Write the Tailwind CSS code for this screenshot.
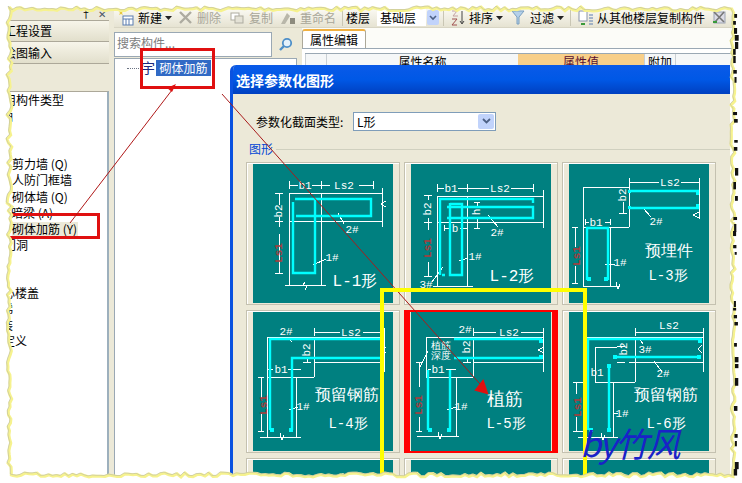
<!DOCTYPE html>
<html lang="zh">
<head>
<meta charset="UTF-8">
<title>选择参数化图形</title>
<script src="https://cdn.jsdelivr.net/npm/@tailwindcss/browser@4"></script>
</head>
<body class="bg-white">
<div class="relative w-[742px] h-[483px] overflow-hidden flex pt-[8px] bg-[#ece9d8] text-[12px] leading-none text-black font-['Noto_Sans_CJK_SC','Liberation_Sans',sans-serif]">

  <!-- left panel -->
  <aside class="w-[109px] shrink-0 flex flex-col overflow-hidden">
    <div class="h-[12px] flex justify-end items-center gap-[7px] pr-[3px] text-[10px]">
      <span>&#x2020;</span><span class="text-gray-600">&#x2715;</span>
    </div>
    <div class="h-[22px] pl-[4px] flex items-center bg-gradient-to-b from-[#f7f5ea] to-[#e2dfcc] border-y border-[#aca899]">工程设置</div>
    <div class="h-[22px] pl-[4px] flex items-center bg-gradient-to-b from-[#f7f5ea] to-[#e2dfcc] border-b border-[#aca899]">绘图输入</div>
    <div class="h-[27px] bg-[#ece9d8]"></div>
    <div class="flex-1 bg-white border-r-2 border-[#9db0bd] border-t border-t-[#aca899] flex flex-col">
      <div class="h-[16px] pl-[4px] flex items-center whitespace-nowrap ml-[-12px]">常用构件类型</div>
      <div class="h-[16px] pl-[1px] flex items-center">轴</div>
      <div class="h-[32px]"></div>
      <div class="h-[16px] pl-[12px] flex items-center">剪力墙 (Q)</div>
      <div class="h-[16px] pl-[12px] flex items-center">人防门框墙</div>
      <div class="h-[17px] pl-[12px] flex items-center">砌体墙 (Q)</div>
      <div class="h-[16px] pl-[11px] flex items-center">暗梁 (A)</div>
      <div class="h-[16px] pl-[12px] flex items-center"><span class="bg-[#ece9d8] h-[15px] w-[66px] flex items-center whitespace-nowrap">砌体加筋 (Y)</span></div>
      <div class="h-[16px] pl-[4px] flex items-center">门洞</div>
      <div class="h-[32px]"></div>
      <div class="h-[16px] flex items-center whitespace-nowrap ml-[-9px]">空心楼盖</div>
      <div class="h-[16px] pl-[1px] flex items-center">梯</div>
      <div class="h-[16px] pl-[1px] flex items-center">装</div>
      <div class="h-[16px] flex items-center whitespace-nowrap ml-[-9px]">自定义</div>
    </div>
  </aside>

  <!-- main -->
  <main class="flex-1 min-w-0 flex flex-col pl-[5px]">
    <!-- toolbar -->
    <div class="h-[20px] shrink-0 flex items-center bg-gradient-to-b from-[#fbfaf4] to-[#e6e3d2] border-b border-[#d8d5c4] whitespace-nowrap">
      <svg class="ml-[4px] w-[16px] h-[16px]" viewBox="0 0 16 16"><path d="M1 1l2 1 2-1-1 2 1 2-2-1-2 1 1-2z" fill="#e8c840"/><rect x="5" y="6" width="10" height="9" fill="#fff" stroke="#5a7db0"/><path d="M5 9h10M8 9v6M11 9v6" stroke="#5a7db0"/></svg>
      <span class="ml-[4px]">新建</span>
      <svg class="ml-[3px] w-[7px] h-[4px]" viewBox="0 0 7 4"><path d="M0 0h7L3.500 4z" fill="#222"/></svg>
      <svg class="ml-[7px] w-[13px] h-[13px]" viewBox="0 0 13 13"><path d="M1 1l11 11M12 1L1 12" stroke="#adaba0" stroke-width="2.4"/></svg>
      <span class="ml-[5px] text-[#a8a698]">删除</span>
      <svg class="ml-[9px] w-[14px] h-[12px]" viewBox="0 0 14 12"><rect x="1" y="1" width="8" height="7" fill="#fff" stroke="#adaba0"/><rect x="5" y="4" width="8" height="7" fill="#e4e2d6" stroke="#adaba0"/></svg>
      <span class="ml-[5px] text-[#a8a698]">复制</span>
      <svg class="ml-[7px] w-[16px] h-[15px]" viewBox="0 0 16 15"><path d="M1 14L7 3l3 3-5 8z" fill="#b9b7aa"/><path d="M10 8h5v6h-5z" fill="#8d8b7e"/></svg>
      <span class="ml-[4px] text-[#a8a698]">重命名</span>
      <span class="ml-[6px] w-px h-[16px] bg-[#c9c6b4]"></span>
      <span class="ml-[3px]">楼层</span>
      <span class="ml-[7px] w-[49px] h-[17px] bg-white flex items-center pl-[3px]">基础层</span>
      <span class="ml-[1px] w-[12px] h-[15px] bg-[#c1d3fb] flex items-center justify-center rounded-[2px]"><svg class="w-[8px] h-[6px]" viewBox="0 0 8 6"><path d="M1 1l3 3 3-3" fill="none" stroke="#4d6185" stroke-width="1.6"/></svg></span>
      <span class="ml-[4px] w-px h-[16px] bg-[#c9c6b4]"></span>
      <svg class="ml-[6px] w-[16px] h-[16px]" viewBox="0 0 16 16"><path d="M2 1h5L3 6h5" fill="none" stroke="#c3a0a0"/><path d="M2 9h5L2 15h5" fill="none" stroke="#a05050"/><path d="M12 1v12M10 11l2 3 2-3" fill="none" stroke="#444"/></svg>
      <span class="ml-[3px]">排序</span>
      <svg class="ml-[3px] w-[7px] h-[4px]" viewBox="0 0 7 4"><path d="M0 0h7L3.500 4z" fill="#222"/></svg>
      <svg class="ml-[8px] w-[14px] h-[15px]" viewBox="0 0 14 15"><path d="M1 1h12L8 7v7H6V7z" fill="#b4d0ea" stroke="#7a9fbe"/></svg>
      <span class="ml-[5px]">过滤</span>
      <svg class="ml-[3px] w-[7px] h-[4px]" viewBox="0 0 7 4"><path d="M0 0h7L3.500 4z" fill="#222"/></svg>
      <span class="ml-[6px] w-px h-[16px] bg-[#c9c6b4]"></span>
      <svg class="ml-[7px] w-[16px] h-[16px]" viewBox="0 0 16 16"><rect x="1" y="1" width="8" height="10" fill="#fff" stroke="#8a94a8"/><path d="M11 5h4M11 8h4M11 11h4M11 14h4" stroke="#5a7db0"/><path d="M3 14h4" stroke="#3a9a3a" stroke-width="2"/></svg>
      <span class="ml-[3px]">从其他楼层复制构件</span>
      <svg class="ml-[7px] w-[15px] h-[15px]" viewBox="0 0 15 15"><rect x="2" y="2" width="11" height="11" fill="#dcdce6" stroke="#9aa2b2"/><path d="M2 2l10 10M12 2L3 12" stroke="#777" stroke-width="1.600"/><path d="M1 12h4" stroke="#3a9a3a" stroke-width="2"/></svg>
    </div>

    <div class="flex-1 flex min-h-0">
      <!-- component tree -->
      <section class="w-[183px] shrink-0 flex flex-col pt-[4px]">
        <div class="h-[25px] flex gap-[2px]">
          <div class="w-[158px] bg-white border border-[#9aa8b4] pl-[2px] pb-[3px] flex items-center text-[#7d7d7d] text-[12px]">搜索构件...</div>
          <div class="w-[23px] flex items-center justify-center">
            <svg class="w-[15px] h-[15px]" viewBox="0 0 15 15"><circle cx="9" cy="6" r="4.2" fill="#e4f1fb" stroke="#4e8fc8" stroke-width="1.8"/><path d="M6 9l-4 4" stroke="#4e8fc8" stroke-width="2.4"/></svg>
          </div>
        </div>
        <div class="flex-1 mt-[1px] bg-white border border-[#9aa8b4] pt-[1px] flex items-start">
          <span class="ml-[12px] mt-[8px] w-[14px] border-t border-dotted border-gray-500"></span>
          <span class="text-[14px] text-[#1c2a80] w-[12px]">宇</span>
          <span class="ml-[3px] w-[55px] h-[16px] bg-[#316ac5] text-white flex items-center justify-center">砌体加筋</span>
        </div>
      </section>

      <!-- property panel -->
      <section class="flex-1 min-w-0 pl-[5px] flex flex-col">
        <div class="h-[20px] bg-[#fcfcf8] pt-px">
          <div class="h-[19px] w-[64px] bg-white border border-b-0 border-[#aca899] border-t-2 border-t-[#f0b040] rounded-t-[3px] flex items-center justify-center">属性编辑</div>
        </div>
        <div class="flex-1 bg-white border-t border-[#9aa8b4] pt-[4px] pl-[3px]">
          <div class="h-[14px] flex border-t border-[#9aa8b4] bg-[#f5f7f8]">
            <div class="w-[22px] border-x border-[#c9cfd4]"></div>
            <div class="w-[191px] text-center pt-[2px]">属性名称</div>
            <div class="w-[126px] bg-[#f8cf8a] text-[#5a1030] text-center pt-[2px]">属性值</div>
            <div class="w-[32px] border-x border-[#c9cfd4] text-center pt-[2px]">附加</div>
          </div>
        </div>
      </section>
    </div>
  </main>

  <!-- dialog -->
  <div class="absolute left-[230px] top-[65px] w-[500px] h-[418px] bg-[#ece9d8] border-l-[3px] border-[#0a52e0] rounded-tl-[6px] overflow-hidden">
    <div class="h-[29px] bg-gradient-to-b from-[#0a5ae8] via-[#0058e6] to-[#0040c0] flex items-center pl-[3px] font-bold text-[14px] text-white">选择参数化图形</div>
    <div class="flex items-center h-[19px] mt-[18px] pl-[23px]">
      <span class="w-[97px]">参数化截面类型:</span>
      <div class="w-[143px] h-[19px] bg-white border border-[#7f9db9] flex items-center justify-between pl-[3px] pr-px">
        <span>L形</span>
        <span class="w-[16px] h-[15px] bg-[#c1d3fb] rounded-[2px] flex items-center justify-center"><svg class="w-[9px] h-[7px]" viewBox="0 0 9 7"><path d="M1 1l3.500 3.500L8 1" fill="none" stroke="#4d6185" stroke-width="1.800"/></svg></span>
      </div>
    </div>
    <div class="flex items-center h-[12px] mt-[12px] pl-[16px]">
      <span class="text-[#0046d5]">图形</span>
      <span class="ml-[3px] flex-1 h-px bg-[#d0d0bf]"></span>
    </div>
    <div class="grid grid-cols-[154px_154px_154px] gap-x-[4px] gap-y-[5px] mt-[7px] ml-[13px] w-[470px]">

      <!-- L-1 -->
      <div class="h-[143px] border border-[#c4c1b0] shadow-[inset_1px_1px_0_#fff] flex items-center justify-center">
        <svg class="w-[140px] h-[139px] bg-[#008080]" viewBox="0 0 140 139" font-size="11" font-family="'Liberation Mono',monospace" text-anchor="middle" fill="#fff">
          <g fill="none" stroke="#fff" shape-rendering="crispEdges">
            <path d="M36 21h9M59 21h9M68 21h9M106 21h14M36 17v8M68 17v8M120 17v8M36 29h93M36 29v92M68 29v92M36 57h93M129 24v39M32 121h41M26 29v12M26 53v10M26 70v39M22 29h8M22 57h8M22 109h8"/>
            <path d="M52 118l-2 3 4 1-2 4M85 49l6 11M60 101l13-6M133 37l-5 3 5 3"/>
          </g>
          <g fill="none" stroke="#0ff" stroke-width="2.400">
            <path d="M42 35h76v17H43"/>
            <path d="M40 38v71h22V35"/>
          </g>
          <text x="52" y="25">b1</text><text x="91" y="25">Ls2</text>
          <text x="99" y="69">2#</text><text x="79" y="97">1#</text>
          <text transform="rotate(-90 29 47)" x="29" y="47">b2</text>
          <text transform="rotate(-90 29 89)" x="29" y="89" fill="#a83c3c" font-weight="bold">Ls1</text>
          <text x="102" y="122" font-size="16">L-1形</text>
        </svg>
      </div>

      <!-- L-2 -->
      <div class="h-[143px] border border-[#c4c1b0] shadow-[inset_1px_1px_0_#fff] flex items-center justify-center">
        <svg class="w-[140px] h-[139px] bg-[#008080]" viewBox="0 0 140 139" font-size="11" font-family="'Liberation Mono',monospace" text-anchor="middle" fill="#fff">
          <g fill="none" stroke="#fff" shape-rendering="crispEdges">
            <path d="M26 24h7M47 24h9M56 24h22M100 24h22M26 20v8M56 20v8M122 20v8M26 32h106M26 32v90M56 32v90M26 58h106M132 26v38M22 122h40M17 31v5M17 54v12M17 98v14M13 31h8M13 58h8M13 112h8M66 38v6M66 53v11M63 38h6M63 64h6M33 64h6M49 64h7M33 61v6M56 61v6"/>
            <path d="M77 51l10 12M48 97l9-3M21 118l11-15"/>
          </g>
          <g fill="none" stroke="#0ff" stroke-width="2.400">
            <path d="M29 111V35h93v4M34 111h-3"/>
            <path d="M36 43h86v11H36"/>
            <path d="M39 39v72h12V40H39"/>
          </g>
          <text x="40" y="28">b1</text><text x="89" y="28">Ls2</text><text x="44" y="68">b</text>
          <text x="86" y="72">2#</text><text x="64" y="96">1#</text><text x="15" y="124">3#</text>
          <text transform="rotate(-90 20 45)" x="20" y="45">b2</text>
          <text transform="rotate(-90 20 84)" x="20" y="84" fill="#a83c3c" font-weight="bold">Ls1</text>
          <text transform="rotate(-90 69 48)" x="69" y="48">h</text>
          <text x="101" y="117" font-size="16">L-2形</text>
        </svg>
      </div>

      <!-- L-3 -->
      <div class="h-[143px] border border-[#c4c1b0] shadow-[inset_1px_1px_0_#fff] flex items-center justify-center">
        <svg class="w-[140px] h-[139px] bg-[#008080]" viewBox="0 0 140 139" font-size="11" font-family="'Liberation Mono',monospace" text-anchor="middle" fill="#fff">
          <g fill="none" stroke="#fff" shape-rendering="crispEdges">
            <path d="M60 18h30M112 18h18M60 14v8M130 14v41M14 23h46M14 23v99M14 63h46M60 14v49M41 63v59M14 122h34M54 23v1M54 38v11M50 49h8M16 58h4M36 58h5M16 55v6M41 55v6M6 63v20M6 102v17M3 63h6M3 119h6"/>
            <path d="M47 118l2 7 2-5M74 44l8 9M36 100h10M130 48l-6 3 6 3"/>
          </g>
          <g fill="none" stroke="#0ff" stroke-width="2.400">
            <path d="M60 27h69v3M60 44h69v-3"/>
            <path d="M18 116V64h21v52"/>
          </g>
          <g fill="#0ff"><rect x="59" y="26" width="3" height="3"/><rect x="59" y="42" width="3" height="3"/><rect x="127" y="27" width="3" height="4"/><rect x="127" y="40" width="3" height="4"/><rect x="18" y="113" width="4" height="4"/><rect x="35" y="113" width="4" height="4"/></g>
          <text x="101" y="22">Ls2</text><text x="27" y="62">b1</text><text x="87" y="61">2#</text><text x="51" y="102">1#</text>
          <text transform="rotate(-90 57 31)" x="57" y="31">b2</text>
          <text transform="rotate(-90 11 92)" x="11" y="92" fill="#a83c3c" font-weight="bold">Ls1</text>
          <text x="100" y="92" font-size="16">预埋件</text>
          <text x="99" y="116" font-size="14">L-3形</text>
        </svg>
      </div>

      <!-- L-4 -->
      <div class="h-[143px] border border-[#c4c1b0] shadow-[inset_1px_1px_0_#fff] flex items-center justify-center">
        <svg class="w-[140px] h-[139px] bg-[#008080]" viewBox="0 0 140 139" font-size="11" font-family="'Liberation Mono',monospace" text-anchor="middle" fill="#fff">
          <g fill="none" stroke="#fff" shape-rendering="crispEdges">
            <path d="M61 20h26M110 20h21M61 16v8M131 16v44M14 25h117M14 25v100M14 65h47M61 25v40M61 50h70M43 65v60M7 125h41M54 25v3M54 46v4M50 50h8M14 57h6M35 57h13M8 65v21M8 102v17M5 65h6M5 119h6"/>
            <path d="M27 121l2 7 2-5M34 25l5 5M36 98l9-3M133 35l-6 3 6 3"/>
          </g>
          <g fill="none" stroke="#0ff" stroke-width="2.400">
            <path d="M17 118V27h113"/>
            <path d="M39 118V46h91"/>
          </g>
          <g fill="#0ff"><rect x="17" y="116" width="4" height="4"/><rect x="36" y="116" width="4" height="4"/></g>
          <text x="98" y="24">Ls2</text><text x="33" y="23">2#</text><text x="28" y="61">b1</text><text x="50" y="98">1#</text>
          <text transform="rotate(-90 57 38)" x="57" y="38">b2</text>
          <text transform="rotate(-90 14 93)" x="14" y="93" fill="#a83c3c" font-weight="bold">Ls1</text>
          <text x="94" y="88" font-size="16">预留钢筋</text>
          <text x="95" y="116" font-size="14">L-4形</text>
        </svg>
      </div>

      <!-- L-5, selected -->
      <div class="h-[143px] border-x-[6px] border-y-[2px] border-[#f00] flex items-center justify-center">
        <svg class="w-[140px] h-[139px] bg-[#008080]" viewBox="0 0 140 139" font-size="11" font-family="'Liberation Mono',monospace" text-anchor="middle" fill="#fff">
          <g fill="none" stroke="#fff" shape-rendering="crispEdges">
            <path d="M62 20h23M110 20h22M62 16v8M132 16v44M15 25h117M15 25v26M15 65h47M62 25v40M62 50h70M45 65v60M6 124h42M15 51v14M56 25v1M56 46v4M52 50h8M17 57h3M35 57h10M8 50v25M8 105v14M5 50h6M5 119h6"/>
            <path d="M27 120l2 7 2-5M9 55l8-16M36 98l9-3M133 35l-6 3 6 3"/>
          </g>
          <g fill="none" stroke="#0ff" stroke-width="2.400">
            <path d="M43 27h88M43 46h88M17 58v60M39 58v60"/>
          </g>
          <g fill="#0ff"><rect x="128" y="27" width="4" height="4"/><rect x="128" y="43" width="4" height="4"/><rect x="17" y="116" width="4" height="4"/><rect x="36" y="116" width="4" height="4"/></g>
          <text x="98" y="24">Ls2</text><text x="54" y="21">2#</text><text x="27" y="61">b1</text><text x="50" y="98">1#</text>
          <text x="30" y="37" font-size="10">植筋</text><text x="30" y="47" font-size="10">深度</text>
          <text transform="rotate(-90 59 35)" x="59" y="35">b2</text>
          <text transform="rotate(-90 11 93)" x="11" y="93" fill="#a83c3c" font-weight="bold">Ls1</text>
          <text x="94" y="93" font-size="18">植筋</text>
          <text x="95" y="116" font-size="14">L-5形</text>
        </svg>
      </div>

      <!-- L-6 -->
      <div class="h-[143px] border border-[#c4c1b0] shadow-[inset_1px_1px_0_#fff] flex items-center justify-center">
        <svg class="w-[140px] h-[139px] bg-[#008080]" viewBox="0 0 140 139" font-size="11" font-family="'Liberation Mono',monospace" text-anchor="middle" fill="#fff">
          <g fill="none" stroke="#fff" shape-rendering="crispEdges">
            <path d="M66 20h68M66 16v8M134 16v44M18 25h116M18 25v45M66 25v45M26 70h40M26 35h22M26 35v35M44 70v55M60 50h74M9 125h40M4 70h14M4 119h14M7 70v12M7 105v14M48 34h8M48 50h8"/>
            <path d="M32 121l2 7 2-5M70 26l4 6M85 49l8 11M44 101h5M133 33l-4 4 4 4"/>
          </g>
          <g fill="none" stroke="#0ff" stroke-width="2.400">
            <path d="M19 118V27h114"/>
            <path d="M44 45h87M40 53v65"/>
          </g>
          <g fill="#0ff"><rect x="129" y="27" width="4" height="4"/><rect x="44" y="43" width="4" height="4"/><rect x="128" y="43" width="4" height="4"/><rect x="38" y="52" width="4" height="4"/><rect x="20" y="116" width="4" height="4"/><rect x="38" y="116" width="4" height="4"/></g>
          <text x="100" y="17">Ls2</text><text x="76" y="41">3#</text><text x="94" y="65">2#</text><text x="28" y="64">b1</text><text x="53" y="105">1#</text>
          <text transform="rotate(-90 58 37)" x="58" y="37">b2</text>
          <text transform="rotate(-90 12 95)" x="12" y="95" fill="#a83c3c" font-weight="bold">Ls1</text>
          <text x="97" y="88" font-size="16">预留钢筋</text>
          <text x="97" y="116" font-size="14">L-6形</text>
        </svg>
      </div>

      <!-- third row, cut off by the window -->
      <div class="h-[143px] border border-[#c4c1b0] shadow-[inset_1px_1px_0_#fff] flex items-center justify-center">
        <svg class="w-[140px] h-[139px] bg-[#008080]" viewBox="0 0 140 139" font-size="11" font-family="'Liberation Mono',monospace" text-anchor="middle" fill="#fff"><path d="M61 16h26M110 16h21" stroke="#fff" fill="none"/><text x="98" y="20">Ls2</text></svg>
      </div>
      <div class="h-[143px] border border-[#c4c1b0] shadow-[inset_1px_1px_0_#fff] flex items-center justify-center">
        <div class="w-[140px] h-[139px] bg-[#008080]"></div>
      </div>
      <div class="h-[143px] border border-[#c4c1b0] shadow-[inset_1px_1px_0_#fff] flex items-center justify-center">
        <div class="w-[140px] h-[139px] bg-[#008080]"></div>
      </div>
    </div>
  </div>

  <!-- annotations drawn on top of the screenshot -->
  <svg class="absolute inset-0 w-[742px] h-[483px] pointer-events-none" viewBox="0 0 742 483">
    <g fill="none" stroke="#e01010" stroke-width="3" shape-rendering="crispEdges">
      <rect x="141" y="49.500" width="72" height="38"/>
      <path d="M8 214.500H98.500V237H8"/>
    </g>
    <path d="M70 223L172 90" stroke="#b01818" fill="none"/>
    <path d="M176 84l-9 4 5 4z" fill="#e01010"/>
    <path d="M222 94L480 384" stroke="#a81c1c" fill="none"/>
    <path d="M487 393l-11-3 7-9z" fill="#e01010" stroke="#e01010" stroke-width="2"/>
    <rect x="381.500" y="290" width="203" height="200" fill="none" stroke="#ffff00" stroke-width="4" shape-rendering="crispEdges"/>
  </svg>
  <span class="absolute left-[580px] top-[423px] text-[34px] leading-[40px] text-[#1a22c8] italic whitespace-nowrap tracking-[-2px]">by竹风</span>

  <!-- torn paper edge -->
  <svg id="edge" class="absolute inset-0 w-[742px] h-[483px] pointer-events-none" viewBox="0 0 742 483"></svg>
</div>

<script>
    // torn edge round the picture, fixed seed so it stays the same every run
    let seed = 7;
    function rnd() {
        seed = (seed * 16807) % 2147483647;
        return seed / 2147483647;
    }

    const L = 9, T = 9, R = 733, B = 475;
    const pts = [];
    for (let x = L; x < R; x += 4) pts.push([x, T + rnd() * 4 - 2]);
    for (let y = T; y < B; y += 4) pts.push([R + rnd() * 4 - 2, y]);
    for (let x = R; x > L; x -= 4) pts.push([x, B + rnd() * 4 - 2]);
    for (let y = B; y > T; y -= 4) pts.push([L + rnd() * 5 - 2, y]);
    const d = 'M' + pts.map(p => p[0].toFixed(1) + ' ' + p[1].toFixed(1)).join('L') + 'Z';

    let specks = '';
    for (let y = 14; y < 470; y += 7) {
        if (rnd() < 0.55) {
            const h = 2 + rnd() * 6;
            specks += `<rect x="${733 + rnd() * 2}" y="${y}" width="${2 + rnd() * 2}" height="${h}" fill="#111"/>`;
        }
    }

    document.getElementById('edge').innerHTML =
        `<path d="M0 0H742V483H0Z${d}" fill="#fff" fill-rule="evenodd"/>` +
        `<path d="${d}" fill="none" stroke="#f6f28e" stroke-width="3"/>` +
        `<path d="${d}" fill="none" stroke="#b8b8a8" stroke-width="0.6" transform="translate(-1 -1)"/>` +
        specks;
</script>
</body>
</html>
